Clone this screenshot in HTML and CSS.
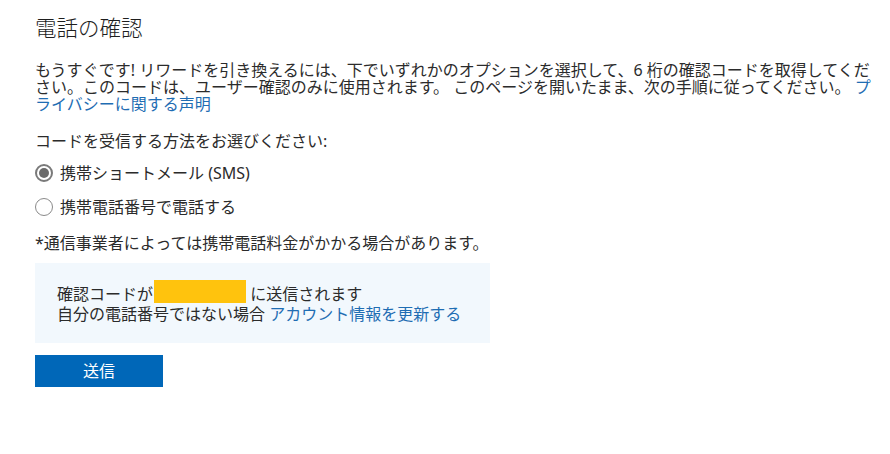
FILE: index.html
```html
<!DOCTYPE html>
<html lang="ja">
<head>
<meta charset="utf-8">
<title>電話の確認</title>
<link rel="stylesheet" href="styles.css">
</head>
<body>
<main class="page">
  <h1 class="title">電話の確認</h1>
  <p class="intro">もうすぐです! リワードを引き換えるには、下でいずれかのオプションを選択して、6 桁の確認コードを取得してください。このコードは、ユーザー確認のみに使用されます。 このページを開いたまま、次の手順に従ってください。 <a class="link" href="#">プライバシーに関する声明</a></p>
  <p class="prompt">コードを受信する方法をお選びください:</p>
  <div class="options">
    <label class="option"><span class="radio checked"></span><span class="label">携帯ショートメール (SMS)</span></label>
    <label class="option"><span class="radio"></span><span class="label">携帯電話番号で電話する</span></label>
  </div>
  <p class="note">*通信事業者によっては携帯電話料金がかかる場合があります。</p>
  <div class="info">
    <div class="info-line">確認コードが<span class="redact"></span> に送信されます</div>
    <div class="info-line">自分の電話番号ではない場合 <a class="link" href="#">アカウント情報を更新する</a></div>
  </div>
  <button class="submit" type="button">送信</button>
</main>
</body>
</html>
```

FILE: styles.css
```css
html, body {
  margin: 0;
  padding: 0;
  background: #ffffff;
}

body {
  font-family: "Noto Sans", "Noto Sans CJK JP", sans-serif;
  color: #2b2b2b;
}

.page {
  width: 850px;
  padding: 13px 0 0 35px;
  display: flex;
  flex-direction: column;
  align-items: flex-start;
}

.title {
  margin: 0;
  font-size: 21.5px;
  line-height: 30px;
  font-weight: 300;
  color: #1e1e1e;
}

.intro {
  margin: 19px 0 0;
  font-size: 16px;
  line-height: 17px;
}

.link {
  color: #1f6db3;
  text-decoration: none;
}

.prompt {
  margin: 18px 0 0;
  font-size: 16px;
  line-height: 20px;
}

.options {
  margin-top: 10px;
  display: flex;
  flex-direction: column;
  gap: 10px;
}

.option {
  display: flex;
  align-items: center;
  gap: 7px;
  height: 24px;
  font-size: 16px;
  line-height: 20px;
}

.radio {
  width: 18px;
  height: 18px;
  box-sizing: border-box;
  border: 1.5px solid #8a8a8a;
  border-radius: 50%;
  background: #fff;
  display: flex;
  align-items: center;
  justify-content: center;
}

.radio.checked {
  border: 2px solid #7a7a7a;
}

.radio.checked::after {
  content: "";
  width: 10px;
  height: 10px;
  border-radius: 50%;
  background: #6a6a6a;
}

.note {
  margin: 14px 0 0;
  font-size: 16px;
  line-height: 20px;
}

.info {
  margin-top: 10px;
  width: 455px;
  box-sizing: border-box;
  padding: 21px 22px 19px;
  background: #f2f8fd;
  font-size: 16px;
  line-height: 20px;
}

.redact {
  display: inline-block;
  width: 92px;
  height: 23px;
  margin: -4px 0 -3px 1px;
  vertical-align: top;
  background: #ffc30d;
}

.submit {
  margin-top: 12px;
  width: 128px;
  height: 32px;
  border: none;
  padding: 0;
  background: #0067b8;
  color: #ffffff;
  font-family: "Noto Sans", "Noto Sans CJK JP", sans-serif;
  font-size: 16px;
  line-height: 20px;
  cursor: pointer;
}
```
